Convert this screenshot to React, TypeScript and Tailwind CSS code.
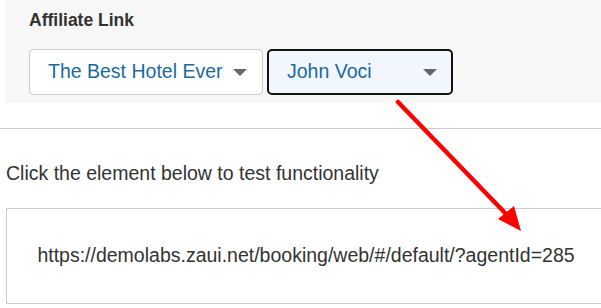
function Caret() {
  return (
    <svg width="14" height="7" viewBox="0 0 14 7" className="shrink-0">
      <polygon points="0,0 14,0 7,7" fill="#666666" />
    </svg>
  );
}

export default function App() {
  return (
    <div className="relative h-[308px] w-[601px] overflow-hidden bg-white font-['Liberation_Sans',Arial,sans-serif]">
      <div className="ml-[6px] h-[103px] w-[600px] bg-[#f7f7f7] pl-[23px] pt-[10px]">
        <div className="text-[17.5px] font-bold leading-[20px] text-[#333333]">Affiliate Link</div>
        <div className="mt-[19px] flex items-center gap-[4px]">
          <div className="flex h-[46px] w-[234px] items-center justify-between rounded-[4px] border border-[#cccccc] bg-white pl-[18px] pr-[15px]">
            <span className="text-[19.5px] leading-none text-[#1a6aa0]">The Best Hotel Ever</span>
            <Caret />
          </div>
          <div className="flex h-[46px] w-[186px] items-center justify-between rounded-[5px] border-2 border-[#111111] bg-[#f2f6fd] pl-[18px] pr-[14px]">
            <span className="text-[19.5px] leading-none text-[#1a6aa0]">John Voci</span>
            <Caret />
          </div>
        </div>
      </div>

      <div className="mt-[25px] border-t border-[#cccccc]" />

      <p className="ml-[6px] mt-[33px] text-[19.5px] leading-[22px] text-[#333333]">
        Click the element below to test functionality
      </p>

      <div className="ml-[6px] mt-[24px] flex h-[96px] w-[600px] items-center justify-center border border-[#cccccc]">
        <span className="text-[19.5px] leading-none text-[#333333]">
          https://demolabs.zaui.net/booking/web/#/default/?agentId=285
        </span>
      </div>

      <svg className="absolute left-0 top-0" width="601" height="308" viewBox="0 0 601 308">
        <line x1="398" y1="102" x2="508" y2="216" stroke="#ff0000" strokeWidth="4.5" strokeLinecap="round" />
        <polygon points="498,219 514,206 521,231" fill="#ff0000" />
      </svg>
    </div>
  );
}
